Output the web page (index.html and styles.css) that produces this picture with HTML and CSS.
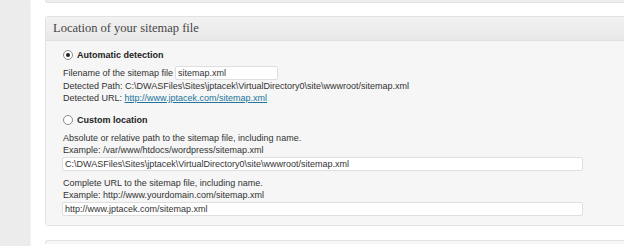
FILE: index.html
```html
<!DOCTYPE html>
<html lang="en">
<head>
    <meta charset="UTF-8">
    <title>Sitemap settings</title>
    <link rel="stylesheet" href="styles.css">
</head>
<body>
    <div class="page">
        <div class="sidebar"></div>
        <div class="main">
            <div class="box box-top"></div>

            <div class="box box-location">
                <div class="box-header">Location of your sitemap file</div>
                <div class="box-body">
                    <div class="radio-row">
                        <span class="radio checked"></span>
                        <span class="radio-label">Automatic detection</span>
                    </div>
                    <div class="field-row">
                        <span>Filename of the sitemap file</span>
                        <div class="input short">sitemap.xml</div>
                    </div>
                    <div class="line">Detected Path: C:\DWASFiles\Sites\jptacek\VirtualDirectory0\site\wwwroot/sitemap.xml</div>
                    <div class="line">Detected URL: <a href="#">http://www.jptacek.com/sitemap.xml</a></div>

                    <div class="radio-row second">
                        <span class="radio"></span>
                        <span class="radio-label">Custom location</span>
                    </div>
                    <div class="group">
                        <div class="line">Absolute or relative path to the sitemap file, including name.</div>
                        <div class="line">Example: /var/www/htdocs/wordpress/sitemap.xml</div>
                        <div class="input long">C:\DWASFiles\Sites\jptacek\VirtualDirectory0\site\wwwroot/sitemap.xml</div>
                    </div>
                    <div class="group">
                        <div class="line">Complete URL to the sitemap file, including name.</div>
                        <div class="line">Example: http://www.yourdomain.com/sitemap.xml</div>
                        <div class="input long">http://www.jptacek.com/sitemap.xml</div>
                    </div>
                </div>
            </div>

            <div class="box box-next"></div>
        </div>
    </div>
</body>
</html>
```

FILE: styles.css
```css
body, html {
    margin: 0;
    padding: 0;
    background: #fff;
    color: #333;
    font-family: "Liberation Sans", Arial, sans-serif;
    font-size: 9px;
    overflow: hidden;
}

.page {
    display: flex;
    height: 246px;
}

.sidebar {
    width: 29px;
    flex-shrink: 0;
    background: #ececec;
    box-shadow: 1px 0 2px rgba(0, 0, 0, 0.12);
}

.main {
    flex: 1;
    padding-left: 16px;
    margin-right: -20px; /* boxes run off the right edge */
}

.box {
    background: #f5f5f5;
    border: 1px solid #e2e2e2;
    border-radius: 3px;
}

.box-top {
    height: 2px;
    border-top: none;
    border-radius: 0 0 3px 3px;
    background: #eeeeee;
}

.box-location {
    margin-top: 13px;
}

.box-next {
    height: 3px;
    margin-top: 14px;
    border-bottom: none;
    border-radius: 3px 3px 0 0;
    background: #f7f7f7;
}

.box-header {
    height: 23px;
    line-height: 23px;
    padding-left: 7px;
    background: linear-gradient(to bottom, #f2f2f2, #e8e8e8);
    border-bottom: 1px solid #e0e0e0;
    font-family: "Liberation Serif", Georgia, serif;
    font-size: 12.5px;
    color: #464646;
}

.box-body {
    padding: 7px 0 9px 17px;
    background: #f6f6f6;
}

.radio-row {
    display: flex;
    align-items: center;
    gap: 4px;
    height: 14px;
}

.radio-row.second {
    margin-top: 9px;
}

.radio {
    width: 8px;
    height: 8px;
    border: 1px solid #8a8a8a;
    border-radius: 50%;
    background: #fff;
    display: flex;
    align-items: center;
    justify-content: center;
}

.radio.checked::after {
    content: "";
    width: 4px;
    height: 4px;
    border-radius: 50%;
    background: #222;
}

.radio-label {
    font-weight: bold;
    font-size: 9px;
    color: #222;
}

.field-row {
    display: flex;
    align-items: center;
    gap: 2px;
    margin-top: 4px;
}

.line {
    line-height: 12px;
    white-space: nowrap;
}

.line a {
    color: #21759b;
}

.group {
    margin-top: 5px;
}

.group + .group {
    margin-top: 6px;
}

.input {
    height: 12px;
    line-height: 12px;
    background: #fff;
    border: 1px solid #dfdfdf;
    border-radius: 2px;
    padding: 0 2px;
    color: #333;
    white-space: nowrap;
}

.input.short {
    width: 97px;
}

.input.long {
    width: 515px;
    margin-left: -1px;
    margin-top: 1px;
}
```
